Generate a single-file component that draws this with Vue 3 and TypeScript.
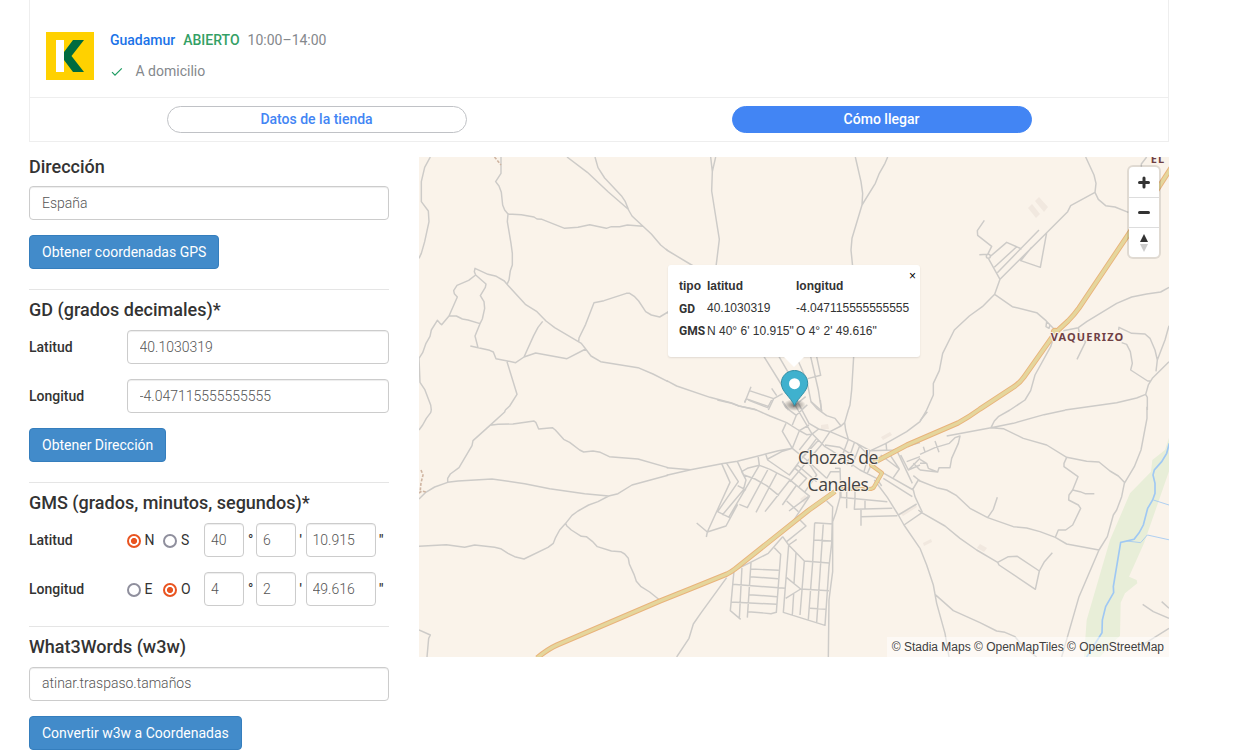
<script setup lang="ts">
import { ref } from 'vue'

interface Sector {
  x: number
  y: number
  roads: string
}

interface GmsRow {
  label: string
  options: string[]
  selected: string
  values: string[]
}

const address = ref('España')
const words = ref('atinar.traspaso.tamaños')
const decimals = ref([
  { label: 'Latitud', value: '40.1030319' },
  { label: 'Longitud', value: '-4.047115555555555' },
])
const gms = ref<GmsRow[]>([
  { label: 'Latitud', options: ['N', 'S'], selected: 'N', values: ['40', '6', '10.915'] },
  { label: 'Longitud', options: ['E', 'O'], selected: 'O', values: ['4', '2', '49.616'] },
])
const units = ['°', "'", '"']

// Minor roads, one entry per map sector, three units to the pixel
const sectors: Sector[] = [
  {
    x: -1,
    y: -7,
    roads: `M37 21L20 52L10 95V155L31 183L33 215L20 275L10 310L3 325
      M249 21V70L233 95L243 108L250 127L254 165L260 180L270 192L310 194L348 201L357 207L372 208L440 235L480 232L515 224L565 235L580 230H605L628 225L675 229
      M270 192L268 215L279 280L283 310V345L277 362L273 390L267 403
      M447 21L508 67L571 126L630 177L642 198L675 229L700 252L728 285L750 303
      M531 21L540 53L560 84L610 137L622 155L632 180
      M173 375L169 365L171 355L210 373L235 379L259 393L267 403L322 463L357 485L384 513L410 533L490 580L503 597L519 618L548 635L660 653L705 672L750 695
      M173 375L152 391L117 406L107 422L109 431L118 441L93 498L71 524L66 520L58 511L40 540L36 559L24 580L14 608L3 625
      M173 375L204 402L202 412L187 437L198 455L200 475L193 507L186 521L171 558L180 593
      M93 498H115L133 507L150 510L186 521
      M157 588L215 601L226 606L234 626L293 638L318 621L353 609L447 626L503 597
      M374 514L360 532L347 557L318 621
      M482 575L483 564L503 523L528 458L558 452L625 430H635L650 440L662 453L683 485L700 495L725 501L750 486
      M267 635L297 733L275 768L262 780
      M3 625L6 697L20 718L38 765L40 780`,
  },
  {
    x: -1,
    y: 243,
    roads: `M40 30L38 38L25 55L14 75L3 90
      M262 30L260 36L216 76L165 122L162 137L123 203L97 222L89 235V247
      M216 76L240 73L285 72L348 63L354 68L362 87L403 83L412 90L437 118L455 127L485 150L497 156L525 153L547 157L574 170L660 177L750 203
      M3 297L22 278L50 261L89 247L120 243L222 237L320 251L395 266L500 281L572 288L600 281L642 255L750 226
      M572 288L540 305L512 315L480 333L462 346L443 370L425 390L413 412L406 430L390 442L318 477L290 470L270 460L248 446L230 442L170 435L140 442L85 434L3 439
      M443 370L446 377L460 390L490 409L505 410L523 424L538 440L580 453L608 455L620 462L631 475L634 492L648 523L655 544L668 559L695 576L725 600
      M3 690L37 705L32 715L27 771`,
  },
  {
    x: 241,
    y: -7,
    roads: `M152 21L157 65L155 123L178 268L168 350M167 21L157 65
      M18 297L25 303L100 348
      M586 21L603 95L608 130L606 165L576 265L573 300L578 350
      M683 21L675 40L658 70L646 100L606 165
      M20 489L30 483
      M20 692L50 708L150 742L215 759L237 768L290 780
      M312 620L365 705M357 620L385 668
      M416 636L440 690L453 755L482 780
      M452 620L475 720L485 785M470 620L482 676L443 686
      M581 620L575 720L570 765L565 780
      M273 710L254 758M268 722L341 746L325 780M260 747L327 770M335 715L350 737M341 746L368 731
      M367 753L385 780M437 740L400 770`,
  },
  {
    x: 241,
    y: 243,
    roads: `M172 0L215 10L237 18L285 28L330 48L380 68L415 90L440 104L455 103L476 87
      M254 7L258 -3M265 0L323 23L335 0
      M367 5L378 23L409 46L397 75M405 15L455 100L495 140L515 152
      M410 0L447 70L476 87L510 95L565 118L590 130L630 152
      M442 14L409 46M453 5L470 25L500 47L525 55L543 78L510 95M481 0L485 36
      M565 30L554 68L557 90L565 118M543 78L554 68
      M378 70L367 94L397 145L418 92L447 75
      M397 145L355 152L317 162L232 184L185 191L92 209L20 226M20 203L92 209
      M397 145L365 155L323 177M317 162L323 180L388 225L412 195L470 245
      M397 145L440 180L500 235M455 103L418 150M476 120L430 170M510 95L480 140
      M185 191L210 247L142 396L110 369M142 396L139 411M142 396L198 378L233 313
      M200 190L235 245L173 335L209 353M232 184L258 240L250 270L187 345
      M294 166L298 196L262 205L245 215L258 240M298 196L330 208L388 238L450 290
      M298 196L206 352M252 225L285 237L320 257L357 287
      M323 210L262 323L238 313M350 220L288 337M390 240L315 335M410 255L367 315M445 290L387 333
      M233 257L258 270M380 303L415 335M448 290L395 370M405 205L440 235L415 262
      M470 115L388 225M488 130L390 245M495 135L540 142L585 170M440 180L470 225L435 275
      M500 235L512 215H540M525 205H540L543 290M515 152L600 210L650 235L665 258
      M565 118L540 185M583 128L560 195M600 135L575 200M630 152L612 215M590 130L640 180L622 220
      M630 152L700 150L780 128M678 128L680 150M800 30L780 65L740 95L678 130L632 152
      M662 165L718 207L700 233M687 160L718 207M712 155L757 250M722 165L745 210L780 195
      M672 220L760 270L765 290L787 337M670 235L757 290M757 270L775 240L780 243
      M740 185L780 170M745 210L780 175M760 190L780 210
      M643 240L682 292L715 345L732 375L780 445
      M715 345L770 312M732 375L787 337M540 292L682 305M560 262V325M585 270V297L583 328L697 325
      M615 302V325M603 328V377M603 350L712 347
      M540 275V292L527 340L518 365V515L512 560L507 600L505 771
      M500 303L518 320L515 430L507 500L495 676L370 637L386 435L368 410
      M464 368L518 372M464 368L458 487L445 658M462 420L513 423M386 435L433 483L507 489M490 370L470 668
      M433 483L420 645M408 458L402 550M380 533L422 567L507 572M377 595L422 567M401 582L397 645M450 625L500 628
      M420 360L438 378L380 425M386 435L410 418M368 410L325 460L270 488L225 510
      M343 443L362 463L349 637L333 641L265 635M273 488L262 653M246 500L238 655M222 512L211 632L242 658
      M273 507L356 511M270 530L354 536M218 553L376 565M268 584L351 590M214 606L350 613
      M200 533L122 640L100 672L87 715L50 771`,
  },
  {
    x: 501,
    y: -7,
    roads: `M497 21L522 75L528 100L525 127L452 167L443 185L380 248L240 388
      M525 127L535 148L557 167L585 171L625 187M680 21L664 42V50
      M193 211L172 242L173 256L215 289L203 313L178 314M199 319a6 6 0 1 0 12 0a6 6 0 1 0 -12 0
      M205 325L240 388L224 433L277 470L350 488L378 512L405 540
      M210 320L260 277L305 297M357 240L232 368M290 290L223 352M335 292L302 332L361 352L380 248
      M224 433L187 470L148 498L103 540L68 610L58 662L40 700V735L20 780
      M380 515L378 530L387 535L390 525
      M430 542L475 533L500 515L590 460L635 441L680 432L722 426L747 412
      M475 533L480 560L497 575L471 628
      M596 540L597 532L635 550L675 552L690 565L705 600L712 630L708 664M747 527L735 570L712 630
      M605 578L620 583L631 605L637 640L632 660L683 693L693 692
      M747 635L697 685L685 705L677 733L650 744L590 758L435 780
      M677 733L682 742V780M405 550L392 590L345 675L332 722L315 750L270 780`,
  },
  {
    x: 501,
    y: 243,
    roads: `M681 20V55L663 150L643 200L613 250L605 290L590 330L580 345L562 410L537 450L477 590L425 771
      M435 31L372 44L280 70L213 83L80 108
      M270 30L235 50L223 63L213 83L250 86L310 115L380 135L440 172L500 184L537 186L570 213L595 228L613 247
      M440 172L432 190V200L474 230L458 270L447 285L446 300L475 315L482 325L458 375L437 390H415L406 412
      M458 270L480 275L495 281H523
      M-20 227L0 243L50 263L80 270L110 287L150 325L203 353L280 380L320 384L360 395L406 412L440 432L537 450
      M203 353L220 328L232 292
      M-5 330L5 338L75 378L120 415L170 450L233 487L265 470L292 469L358 513L372 487L397 458M233 487L237 495L346 568L358 513
      M0 445L20 495L40 555L50 610L75 700L87 771
      M45 583L100 632L180 668L230 693L255 697L285 710L310 740L350 771
      M0 163L45 143L88 130L105 113L120 108L115 130L95 175L90 203H57L53 216L0 210
      M45 123L57 157M10 140L15 155M0 178L20 190L25 205L53 216M0 190H20M22 35L0 62
      M668 613L700 635L747 655M725 605L747 625M747 685L675 730`,
  },
]

// Main road in map pixels
const highway =
  'M752 11L713 72L660 151Q655 158 649 164L636 176L605 220Q600 227 593 231L561 252Q550 260 539 266L488 288L456 305L452 309M416 334.500L390 353L316 412Q312 415 308 417L271 432L241 444L138 488Q129 492 118 501'
const townRoad = 'M458 304L452 308L463 316L455 330Q454 332 450 332H416'
</script>

<template>
  <main class="page">
    <section class="store">
      <div class="store-info">
        <svg class="logo" viewBox="0 0 48 48" aria-hidden="true">
          <rect width="48" height="48" fill="#ffd100" />
          <rect x="10" y="8" width="8" height="32" fill="#fff" />
          <path d="M27 8H38L25.500 24L38 40H27L18 28V20Z" fill="#006b3f" />
        </svg>
        <div>
          <p class="status"><a>Guadamur</a><b>ABIERTO</b><span>10:00–14:00</span></p>
          <p class="delivery">
            <svg viewBox="0 0 12 10" aria-hidden="true"><path d="M1 5.200L4 8.200L10.800 1.400" /></svg>
            A domicilio
          </p>
        </div>
      </div>
      <div class="tabs">
        <button class="pill">Datos de la tienda</button>
        <button class="pill active">Cómo llegar</button>
      </div>
    </section>

    <div class="content">
      <form class="form" @submit.prevent>
        <section class="group">
          <h4>Dirección</h4>
          <input v-model="address" class="control full" />
          <button class="btn">Obtener coordenadas GPS</button>
        </section>
        <section class="group">
          <h4>GD (grados decimales)*</h4>
          <div v-for="row in decimals" :key="row.label" class="row">
            <label>{{ row.label }}</label>
            <input v-model="row.value" class="control" />
          </div>
          <button class="btn">Obtener Dirección</button>
        </section>
        <section class="group">
          <h4>GMS (grados, minutos, segundos)*</h4>
          <div v-for="row in gms" :key="row.label" class="row">
            <label>{{ row.label }}</label>
            <div class="radios">
              <span v-for="o in row.options" :key="o" class="option" @click="row.selected = o">
                <i class="radio" :class="{ on: row.selected === o }"></i>{{ o }}
              </span>
            </div>
            <template v-for="(unit, i) in units" :key="unit">
              <input v-model="row.values[i]" class="control small" :class="{ wide: i === 2 }" />
              <span class="unit" :class="'unit-' + i">{{ unit }}</span>
            </template>
          </div>
        </section>
        <section class="group">
          <h4>What3Words (w3w)</h4>
          <input v-model="words" class="control full words" />
          <button class="btn">Convertir w3w a Coordenadas</button>
        </section>
      </form>

      <div class="map">
        <svg class="tiles" viewBox="0 0 750 500">
          <g transform="translate(501 243) scale(.33333)">
            <path fill="#e8eed8" d="M750 105L735 150L697 180L693 215L630 280L570 420L500 660L492 771H540L580 725L600 708L602 608L615 580L652 550L650 540L627 530L672 430L750 205Z" />
            <g fill="none" stroke="#9fc8f3">
              <path stroke-width="5" d="M748 130L740 160L725 185L703 210L699 225L705 250V280L698 300L683 325L670 375Q660 398 642 418L602 427L580 560L581 578L557 620L547 660L546 698L500 771" />
              <path stroke-width="2.500" d="M700 300L750 316M620 423L662 428L682 405L750 420" />
            </g>
          </g>
          <g fill="#f1e8df">
            <path d="M609 51l4-4l8 10l-4 4zM616 44l4-4l9 10l-4 5zM462 280l9-5l2 3l-9 5zM481 356l15-9l2 3l-14 9zM504 386l8-4l1 3l-8 4zM402 268l7-1l1 5h-8zM381 342l5-4l4 4l-5 4zM558 391l3-4l7 4l-3 4z" />
          </g>
          <g fill="none" stroke="#cdcbc8" stroke-width="4.400" stroke-linejoin="round">
            <path v-for="(s, i) in sectors" :key="i" :d="s.roads" :transform="`translate(${s.x} ${s.y}) scale(.33333)`" />
          </g>
          <path class="track" d="M75.500 0L82 8M2 313L4 318L2 326L1 336M0 336L3 334L7 335" />
          <circle cx="636" cy="175" r="4.200" fill="#e9b37b" />
          <g fill="none" stroke-linejoin="round">
            <path :d="highway" stroke="#e9b37b" stroke-width="5.200" />
            <path :d="townRoad" stroke="#e9b37b" stroke-width="4.200" />
            <circle cx="636" cy="175" r="3.200" fill="#e5d49a" />
            <path :d="highway" stroke="#e5d69c" stroke-width="3.400" />
            <path :d="townRoad" stroke="#e5d69c" stroke-width="2.600" />
          </g>
          <g class="town">
            <text x="419" y="307">Chozas de</text>
            <text x="419" y="334">Canales</text>
          </g>
          <g class="village">
            <text x="668.500" y="184">VAQUERIZO</text>
            <text x="739" y="5.500">EL</text>
          </g>
        </svg>

        <svg class="pin" viewBox="0 0 42 42" aria-hidden="true">
          <defs>
            <radialGradient id="pin-shade">
              <stop offset="0" stop-opacity=".5" />
              <stop offset=".5" stop-opacity=".25" />
              <stop offset="1" stop-opacity="0" />
            </radialGradient>
          </defs>
          <ellipse cx="21.500" cy="35" rx="11.500" ry="6" fill="url(#pin-shade)" />
          <path d="M21.500 .5C14 .5 8.300 6.200 8.300 13.300C8.300 21.500 17.500 27 21.500 35.500C25.500 27 34.700 21.500 34.700 13.300C34.700 6.200 29 .5 21.500 .5Z" fill="#3fb1ce" stroke="#328ea5" />
          <circle cx="21.500" cy="13.700" r="5.500" fill="#fff" />
        </svg>

        <div class="popup">
          <span class="close">×</span>
          <table>
            <tbody>
              <tr><th>tipo</th><th>latitud</th><th>longitud</th></tr>
              <tr><th class="kind">GD</th><td class="raised">40.1030319</td><td class="raised">-4.047115555555555</td></tr>
              <tr><th class="kind">GMS</th><td>N 40° 6' 10.915"</td><td>O 4° 2' 49.616"</td></tr>
            </tbody>
          </table>
        </div>

        <div class="zoom">
          <button><svg viewBox="0 0 29 29"><path d="M10 14.500H19M14.500 10V19" /></svg></button>
          <button><svg viewBox="0 0 29 29"><path d="M10 14.500H19" /></svg></button>
          <button>
            <svg viewBox="0 0 29 29">
              <path class="north" d="M10.500 14L14.500 6L18.500 14Z" />
              <path class="south" d="M10.500 16L14.500 24L18.500 16Z" />
            </svg>
          </button>
        </div>
        <div class="attribution">© Stadia Maps © OpenMapTiles © OpenStreetMap</div>
      </div>
    </div>
  </main>
</template>

<style>
body {
  background: #fff;
  overflow: hidden;
}
</style>

<style scoped>
.page,
.page * {
  box-sizing: border-box;
}
.page {
  width: 1140px;
  margin-left: 29px;
  color: #333;
  font: 300 14px/20px Roboto, sans-serif;
}
.store {
  height: 142px;
  border: 1px solid #eee;
  border-top: 0;
}
.store-info {
  display: flex;
  gap: 16px;
  height: 98px;
  padding: 32px 16px 0;
  border-bottom: 1px solid #eee;
}
.logo {
  width: 48px;
  height: 48px;
}
.status,
.delivery {
  display: flex;
  margin: 0;
  color: #84888c;
  font-weight: 400;
}
.status {
  gap: 8px;
  margin-top: -2px;
}
.status a {
  color: #1a73e8;
  font-weight: 500;
}
.status b {
  color: #34a065;
  font-weight: 500;
}
.delivery {
  gap: 12.5px;
  margin-top: 11px;
}
.delivery svg {
  width: 12px;
  height: 10px;
  margin: 6px 0 0 1px;
  fill: none;
  stroke: #1e9c62;
  stroke-width: 1.2;
}
.tabs {
  display: flex;
  gap: 265px;
  padding: 8px 0 0 137px;
}
.pill {
  width: 300px;
  height: 27px;
  padding: 0 1px 1px 0;
  border: 1px solid #c0c2c6;
  border-radius: 14px;
  background: #fff;
  color: #4285f4;
  font: 500 14px/20px Roboto, sans-serif;
}
.pill.active {
  border-color: #4285f4;
  background: #4285f4;
  color: #fff;
}
.content {
  display: flex;
  gap: 30px;
  padding-top: 14px;
}
.form {
  width: 360px;
}
.group + .group {
  margin-top: 20px;
  padding-top: 10px;
  border-top: 1px solid #e5e5e5;
}
h4 {
  height: 20px;
  margin: 0 0 10px;
  font-size: 18px;
  font-weight: 500;
  line-height: 20px;
}
.group:first-child h4 {
  padding-top: 1px;
}
.control {
  display: block;
  width: 100%;
  min-width: 0;
  height: 34px;
  padding: 6px 11.5px;
  border: 1px solid #ccc;
  border-radius: 4px;
  outline: 0;
  background: #fff;
  box-shadow: inset 0 1px 1px rgba(0, 0, 0, 0.075);
  color: #555;
  font: 300 14px/20px Roboto, sans-serif;
}
.full {
  padding: 6px 12px;
}
.words {
  padding-bottom: 8px;
}
.btn {
  display: block;
  height: 34px;
  margin-top: 15px;
  padding: 0 12px;
  border: 1px solid #357ebd;
  border-radius: 4px;
  background: #428bca;
  color: #fff;
  font: 400 14px/20px Roboto, sans-serif;
}
.row {
  display: flex;
  align-items: center;
}
.row + .row {
  margin-top: 15px;
}
.row label {
  flex: 0 0 98px;
  font-weight: 500;
}
.radios {
  display: flex;
  flex: 0 0 77px;
}
.option {
  display: flex;
  width: 36px;
  align-items: center;
  gap: 3.5px;
  font-weight: 400;
}
.option + .option {
  gap: 4px;
}
.radio {
  width: 14px;
  height: 14px;
  margin-top: 2px;
  border: 2px solid #8f8f9d;
  border-radius: 50%;
}
.radio.on {
  border-color: #e95420;
  background: radial-gradient(circle, #e95420 2.700px, #fff 3.400px);
}
.small {
  flex: 0 0 40px;
  width: 40px;
  padding: 6px;
}
.wide {
  flex-basis: 70px;
  padding-left: 5.5px;
}
.unit {
  flex: 0 0 12px;
  padding-left: 4px;
  font-weight: 500;
}
.unit-1 {
  flex-basis: 10px;
  padding-left: 3.5px;
}
.unit-2 {
  padding-left: 3px;
}
.map {
  position: relative;
  width: 750px;
  height: 500px;
  margin-top: 1px;
  overflow: hidden;
  background: #faf3ea;
}
.tiles {
  display: block;
  width: 750px;
  height: 500px;
}
.track {
  fill: none;
  stroke: #cfb5a2;
  stroke-width: 1.6;
  stroke-dasharray: 3 1.5;
}
.town,
.village {
  text-anchor: middle;
  paint-order: stroke;
  stroke: #faf3ea;
  stroke-width: 2px;
  stroke-linejoin: round;
}
.town {
  fill: #444;
  font: 400 17.600px 'Open Sans', 'Noto Sans', sans-serif;
  letter-spacing: -0.45px;
}
.village {
  fill: #6f3f45;
  font: 700 11px 'Noto Sans', sans-serif;
  letter-spacing: 1.1px;
}
.pin {
  position: absolute;
  left: 354px;
  top: 213px;
  width: 42px;
  height: 42px;
}
.popup {
  position: absolute;
  left: 249px;
  top: 108px;
  width: 252px;
  height: 92px;
  padding: 10px;
  border-radius: 3px;
  background: #fff;
  box-shadow: 0 1px 2px rgba(0, 0, 0, 0.1);
  color: #333;
  font: 400 12px/20px 'Liberation Sans', Arial, sans-serif;
}
.popup::after {
  position: absolute;
  left: 116px;
  top: 92px;
  border: 10px solid transparent;
  border-top-color: #fff;
  border-bottom: 0;
  content: '';
}
.popup table {
  border-collapse: collapse;
  white-space: nowrap;
}
.popup td,
.popup th {
  height: 22.5px;
  padding: 0 1px;
  text-align: left;
}
.popup tr > :nth-child(1) {
  width: 28px;
  min-width: 28px;
  max-width: 28px;
}
.popup tr > :nth-child(2) {
  width: 89px;
  min-width: 89px;
  max-width: 89px;
}
.popup .kind {
  font-family: Roboto, sans-serif;
}
.popup .raised {
  padding-bottom: 2px;
}
.close {
  position: absolute;
  right: 4px;
  top: 1px;
  color: #000;
}
.zoom {
  position: absolute;
  right: 10px;
  top: 10px;
  width: 30px;
  overflow: visible;
  border-radius: 4px;
  background: #fff;
  box-shadow: 0 0 0 2px rgba(0, 0, 0, 0.1);
}
.zoom button {
  display: block;
  width: 30px;
  height: 30px;
  padding: 0;
  border: 0;
  background: transparent;
}
.zoom button + button {
  border-top: 1px solid #ddd;
}
.zoom svg {
  display: block;
  width: 30px;
  height: 29px;
  fill: none;
  stroke: #333;
  stroke-linecap: round;
  stroke-width: 3;
}
.zoom .north {
  fill: #333;
  stroke: none;
}
.zoom .south {
  fill: #ccc;
  stroke: none;
}
.attribution {
  position: absolute;
  right: 0;
  bottom: 0;
  padding: 0 5px;
  background: rgba(255, 255, 255, 0.5);
  color: #404040;
  font: 400 12px/20px 'Liberation Sans', Arial, sans-serif;
}
</style>
